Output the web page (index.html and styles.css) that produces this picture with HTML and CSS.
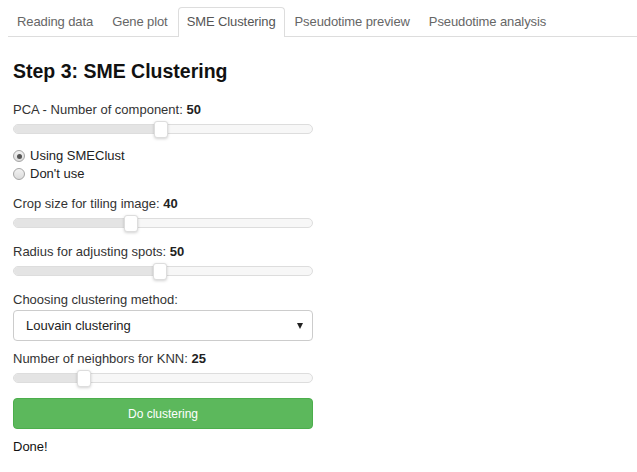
FILE: index.html
```html
<!DOCTYPE html>
<html>
<head>
<meta charset="utf-8">
<link rel="stylesheet" href="styles.css">
</head>
<body>
<ul class="tabs">
  <li class="tab">Reading data</li>
  <li class="tab">Gene plot</li>
  <li class="tab active">SME Clustering</li>
  <li class="tab">Pseudotime preview</li>
  <li class="tab">Pseudotime analysis</li>
</ul>
<main class="content">
  <h3 class="title">Step 3: SME Clustering</h3>

  <div class="label">PCA - Number of component: <b>50</b></div>
  <div class="slider">
    <div class="track"><div class="fill" style="width:148px"></div></div>
    <div class="handle" style="left:141px"></div>
  </div>

  <div class="radios">
    <div class="radio"><span class="dot checked"></span>Using SMEClust</div>
    <div class="radio"><span class="dot"></span>Don't use</div>
  </div>

  <div class="label">Crop size for tiling image: <b>40</b></div>
  <div class="slider">
    <div class="track"><div class="fill" style="width:118px"></div></div>
    <div class="handle" style="left:111px"></div>
  </div>

  <div class="label">Radius for adjusting spots: <b>50</b></div>
  <div class="slider">
    <div class="track"><div class="fill" style="width:147px"></div></div>
    <div class="handle" style="left:140px"></div>
  </div>

  <div class="label">Choosing clustering method:</div>
  <div class="select"><span>Louvain clustering</span><span class="caret"></span></div>

  <div class="label">Number of neighbors for KNN: <b>25</b></div>
  <div class="slider">
    <div class="track"><div class="fill" style="width:71px"></div></div>
    <div class="handle" style="left:64px"></div>
  </div>

  <button class="btn">Do clustering</button>

  <div class="done">Done!</div>
</main>
</body>
</html>
```

FILE: styles.css
```css
* { box-sizing: border-box; }
html, body { margin: 0; padding: 0; background: #fff; }
body {
  font-family: "Liberation Sans", Arial, sans-serif;
  font-size: 13px;
  line-height: 18px;
  color: #333;
}
.tabs {
  list-style: none;
  margin: 7px 0 0 8px;
  padding: 0;
  display: flex;
  border-bottom: 1px solid #ddd;
}
.tab {
  padding: 5px 8px;
  border: 1px solid transparent;
  border-bottom: none;
  margin-right: 1px;
  color: #666;
  line-height: 18px;
  margin-bottom: -1px;
  border-radius: 4px 4px 0 0;
  letter-spacing: -0.1px;
}
.tab.active {
  border-color: #ddd;
  background: #fff;
  color: #555;
  padding-bottom: 6px;
}
.content {
  padding: 0 13px;
}
.title {
  font-size: 19.5px;
  font-weight: bold;
  line-height: 22px;
  color: #111;
  margin: 23px 0 19px 0;
}
.label { color: #333; }
.label b { color: #222; }
.slider {
  position: relative;
  width: 300px;
  padding: 5px 0;
  margin-bottom: 10px;
}
.track {
  height: 10px;
  border: 1px solid #ddd;
  border-radius: 5px;
  background: #f7f7f7;
  overflow: hidden;
}
.fill {
  height: 100%;
  background: #e4e4e4;
}
.handle {
  position: absolute;
  top: 2px;
  width: 14px;
  height: 17px;
  background: #fff;
  border: 1px solid #ddd;
  border-radius: 3px;
  box-shadow: 0 1px 3px rgba(0,0,0,0.18);
}
.radios { margin: -2px 0 12px 0; }
.radio {
  display: flex;
  align-items: center;
  height: 18px;
  color: #222;
}
.dot {
  width: 12px;
  height: 12px;
  border-radius: 50%;
  border: 1px solid #a5a5a5;
  background: linear-gradient(#f2f2f2, #dcdcdc);
  margin-right: 5px;
  display: flex;
  align-items: center;
  justify-content: center;
}
.dot.checked::after {
  content: "";
  width: 5px;
  height: 5px;
  border-radius: 50%;
  background: #555;
}
.select {
  width: 300px;
  height: 31px;
  margin: 1px 0 9px 0;
  border: 1px solid #ccc;
  border-radius: 4px;
  display: flex;
  align-items: center;
  justify-content: space-between;
  padding: 0 9px 0 12px;
  color: #222;
}
.caret {
  width: 0;
  height: 0;
  border-left: 3.5px solid transparent;
  border-right: 3.5px solid transparent;
  border-top: 6px solid #222;
  margin-top: 1px;
}
.btn {
  display: block;
  width: 300px;
  height: 31px;
  margin: 1px 0 9px 0;
  background: #5cb85c;
  border: 1px solid #4cae4c;
  border-radius: 4px;
  color: #fff;
  font-family: "Liberation Sans", Arial, sans-serif;
  font-size: 12px;
  padding: 0;
}
.done { color: #111; }
```
